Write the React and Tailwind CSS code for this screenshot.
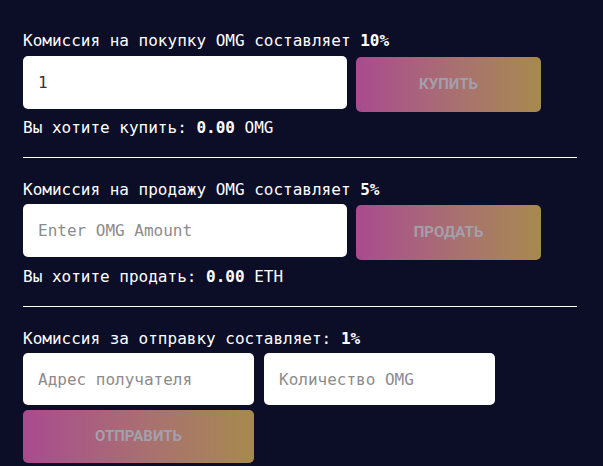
import React, { useState } from "react";

const mono = "font-['DejaVu_Sans_Mono','Liberation_Mono',monospace]";
const btn =
  "rounded-[5px] bg-gradient-to-r from-[#a94a8e] to-[#a68a4c] font-['Roboto','Liberation_Sans',sans-serif] font-bold text-[15px] uppercase text-[#a3a0ab]";
const field =
  `rounded-[5px] bg-white px-[15px] text-[16px] text-[#333] placeholder:text-[#8c8c8c] outline-none ${mono}`;

const Section = ({ title, fee, children }) => (
  <div>
    <p className="leading-6 text-white">
      {title} <b className="font-bold">{fee}</b>
    </p>
    {children}
  </div>
);

const App = () => {
  const [buy, setBuy] = useState("1");
  const [sell, setSell] = useState("");

  return (
    <div className={`min-h-[466px] bg-[#0c0d27] pl-[23px] pt-[29px] text-[16px] ${mono}`}>
      <div className="w-[554px]">
        <Section title="Комиссия на покупку OMG составляет" fee="10%">
          <div className="mt-[3px] flex gap-[9px]">
            <input
              className={`${field} h-[53px] w-[324px]`}
              value={buy}
              onChange={(e) => setBuy(e.target.value)}
            />
            <button className={`${btn} mt-px h-[55px] w-[185px]`}>Купить</button>
          </div>
          <p className="mt-[4px] leading-6 text-white">
            Вы хотите купить: <b>0.00</b> OMG
          </p>
        </Section>

        <hr className="mb-5 mt-[17px] border-t border-white" />

        <Section title="Комиссия на продажу OMG составляет" fee="5%">
          <div className="mt-[2px] flex gap-[9px]">
            <input
              className={`${field} h-[53px] w-[324px]`}
              placeholder="Enter OMG Amount"
              value={sell}
              onChange={(e) => setSell(e.target.value)}
            />
            <button className={`${btn} mt-px h-[55px] w-[185px]`}>Продать</button>
          </div>
          <p className="mt-[5px] leading-6 text-white">
            Вы хотите продать: <b>0.00</b> ETH
          </p>
        </Section>

        <hr className="mb-5 mt-[17px] border-t border-white" />

        <Section title="Комиссия за отправку составляет:" fee="1%">
          <div className="mt-[2px] flex gap-[10px]">
            <input className={`${field} h-[52px] w-[231px]`} placeholder="Адрес получателя" />
            <input className={`${field} h-[52px] w-[231px]`} placeholder="Количество OMG" />
          </div>
          <button className={`${btn} mt-[5px] h-[53px] w-[231px]`}>Отправить</button>
        </Section>
      </div>
    </div>
  );
};

export default App;
